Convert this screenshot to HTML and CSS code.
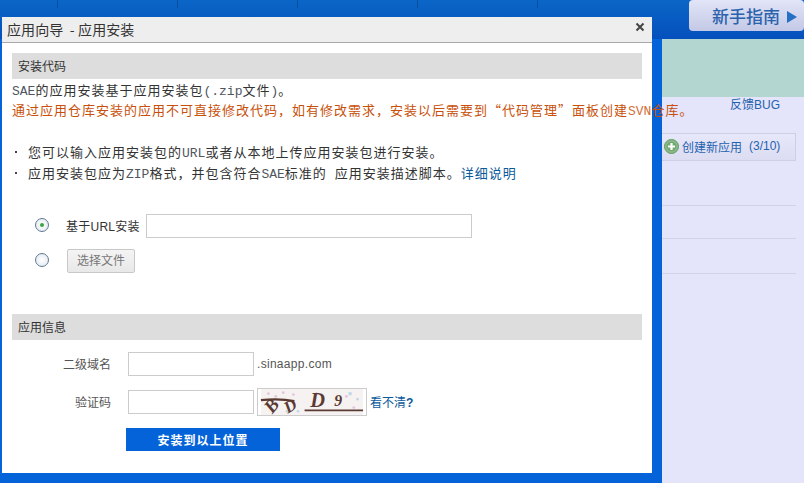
FILE: index.html
```html
<!DOCTYPE html>
<html lang="zh">
<head>
<meta charset="utf-8">
<title>应用向导</title>
<link rel="stylesheet" href="styles.css">
</head>
<body>
<header class="topbar">
  <ul class="tabs"><li></li><li></li><li></li><li></li><li></li></ul>
  <a class="guide">新手指南<span class="guide-arrow"></span></a>
</header>
<div class="band"></div>
<aside class="side">
  <a class="feedback">反馈BUG</a>
  <div class="create">
    <svg class="plus" width="15" height="15" viewBox="0 0 15 15"><circle cx="7.5" cy="7.5" r="7" fill="#8db98d" stroke="#5f9a5f"/><circle cx="7.5" cy="7.5" r="4.8" fill="#6fa96f"/><path d="M7.5 4v7M4 7.5h7" stroke="#fff" stroke-width="2.2"/></svg>
    <span>创建新应用</span><span class="count">(3/10)</span>
  </div>
  <div class="side-row r1"></div>
  <div class="side-row r2"></div>
  <div class="side-row r3"></div>
</aside>

<section class="modal">
  <div class="modal-title">
    <span>应用向导&nbsp; - 应用安装</span>
    <svg class="close" width="10" height="10" viewBox="0 0 10 10"><path d="M1.5 1.5l7 7M8.5 1.5l-7 7" stroke="#444" stroke-width="2"/></svg>
  </div>
  <div class="modal-body">
    <h3 class="sec">安装代码</h3>
    <p class="line"><span class="en">SAE</span>的应用安装基于应用安装包<span class="en">(.zip</span>文件<span class="en">)</span>。</p>
    <p class="line warn">通过应用仓库安装的应用不可直接修改代码，如有修改需求，安装以后需要到“代码管理”面板创建<span class="en">SVN</span>仓库。</p>
    <ul class="notes">
      <li>您可以输入应用安装包的<span class="en">URL</span>或者从本地上传应用安装包进行安装。</li>
      <li>应用安装包应为<span class="en">ZIP</span>格式，并包含符合<span class="en">SAE</span>标准的<span class="en"> </span>应用安装描述脚本。<a class="link">详细说明</a></li>
    </ul>
    <div class="src src-url">
      <span class="radio on"></span>
      <span class="src-label">基于URL安装</span>
      <span class="input url"></span>
    </div>
    <div class="src src-file">
      <span class="radio"></span>
      <span class="file-btn">选择文件</span>
    </div>
    <h3 class="sec sec2">应用信息</h3>
    <div class="field f1">
      <span class="f-label">二级域名</span>
      <span class="input small"></span>
      <span class="suffix">.sinaapp.com</span>
    </div>
    <div class="field f2">
      <span class="f-label">验证码</span>
      <span class="input small"></span>
      <svg class="captcha" width="110" height="28" viewBox="0 0 110 28">
        <rect width="110" height="28" fill="#f6f2f2"/>
        <g fill="#e3c6dd"><circle cx="8" cy="5" r="1.5"/><circle cx="16" cy="8" r="1.5"/><circle cx="24" cy="4" r="1.5"/><circle cx="35" cy="6" r="1.5"/><circle cx="92" cy="8" r="1.5"/><circle cx="100" cy="20" r="1.5"/><circle cx="60" cy="4" r="1"/></g>
        <g fill="#c5d8ea"><circle cx="13" cy="24" r="1.5"/><circle cx="40" cy="24" r="1.5"/><circle cx="96" cy="5" r="2"/><circle cx="104" cy="11" r="1.5"/><circle cx="28" cy="24" r="1.5"/></g>
        <g fill="#5a3a32" font-family="Liberation Serif, serif" font-weight="700" font-style="italic">
          <text x="5" y="24" font-size="20" transform="rotate(-50 12 18)">B</text>
          <text x="25" y="24" font-size="18" transform="rotate(-30 32 18)">D</text>
          <text x="53" y="19" font-size="22">D</text>
          <text x="79" y="18" font-size="17">9</text>
        </g>
        <path d="M0 12q20-2 36 1" stroke="#5a3a32" stroke-width="2.5" fill="none"/>
        <path d="M47 23h63" stroke="#5a3a32" stroke-width="2"/>
      </svg>
      <a class="refresh">看不清<b>?</b></a>
    </div>
    <button class="submit">安装到以上位置</button>
  </div>
</section>
</body>
</html>
```
FILE: styles.css
```css
* { box-sizing: border-box; }
html, body { margin: 0; padding: 0; height: 100%; }
body {
  width: 804px; height: 483px; overflow: hidden; position: relative;
  background: #e4e4fb;
  font-family: "Liberation Sans", "Noto Sans CJK SC", sans-serif;
  font-size: 12px; color: #333;
}
a { color: #0b5a9c; text-decoration: none; }
.topbar {
  height: 39px; position: relative;
  background: linear-gradient(#0b66c6, #0450bd);
}
.tabs { margin: 0; padding: 0 0 0 57px; list-style: none; display: flex; }
.tabs li { width: 120px; height: 8px; border-left: 1px solid #0a4e9e; }
.guide {
  position: absolute; left: 689px; top: 0; width: 115px; height: 31px;
  border-radius: 4px; background: linear-gradient(#e2e5f7, #c3c8e6);
  color: #2b62ac; font: 500 17px/31px "Noto Sans CJK SC", sans-serif;
  padding-left: 23px; white-space: nowrap;
}
.guide-arrow {
  display: inline-block; width: 0; height: 0; margin-left: 7px;
  border-left: 10px solid #2470c4; border-top: 6px solid transparent; border-bottom: 6px solid transparent;
}
.band { height: 58px; background: #b4d6d0; }
.side { padding: 0 8px 0 662px; position: relative; }
.feedback { display: block; height: 36px; padding-left: 68px; line-height: 16px; color: #1f62ae; white-space: nowrap; }
.create {
  height: 28px; display: flex; align-items: center; padding: 0 0 2px 2px; gap: 3px;
  background: linear-gradient(#e8e8fb, #dcdcf2);
  border: 1px solid #cfcfe4; border-left: 0;
  color: #1f62ae;
}
.count { margin-left: 4px; }
.side-row { border-bottom: 1px solid #d2d2e6; }
.r1 { height: 45px; }
.r2 { height: 33px; }
.r3 { height: 35px; }
.modal {
  position: absolute; left: 2px; top: 17px; width: 650px; height: 456px;
  background: #fff;
}
body::before {
  content: ""; position: absolute; left: 0; top: 17px; width: 662px; height: 466px; background: #0463d8;
}
.modal-title {
  height: 26px; background: #eee; border-bottom: 1px solid #aaa;
  display: flex; justify-content: space-between; align-items: center;
  padding: 0 7px 0 5px;
  font: 14px/25px "Noto Sans CJK SC", sans-serif; color: #333;
  letter-spacing: .1px;
}
.close { margin-top: -5px; }
.modal-body { padding: 10px 10px 0; }
.sec {
  margin: 0; height: 26px; padding-left: 6px; background: #ddd;
  font: 400 12px/26px "Noto Sans CJK SC", sans-serif; color: #333;
}
.line {
  margin: 0; height: 20px; line-height: 20px; white-space: nowrap;
  font-family: "Noto Sans CJK SC", sans-serif; font-size: 13px; letter-spacing: 1px; color: #333;
}
.en { font-family: "Liberation Mono", monospace; letter-spacing: 0; color: #50565e; }
.line.warn { color: #c8500a; }
.warn .en { color: #d2703a; }
.sec + .line { margin-top: 1px; }
.notes {
  margin: 21px 0 0; padding: 0; list-style: none;
  font-family: "Noto Sans CJK SC", sans-serif; font-size: 13px; letter-spacing: 1px;
}
.notes li { height: 21px; line-height: 21px; padding-left: 16px; position: relative; white-space: nowrap; }
.notes li::before { content: ""; position: absolute; left: 3px; top: 10px; width: 2px; height: 2px; background: #444; }
.link { color: #0b5a9c; }
.src { display: flex; align-items: center; padding-left: 23px; }
.src-url { margin-top: 31px; height: 24px; }
.src-file { margin-top: 11px; height: 24px; }
.radio {
  width: 14px; height: 14px; border-radius: 50%; border: 1.5px solid #5f7a93;
  background: radial-gradient(circle, #fff, #dfe6ee);
  position: relative; flex: none; margin-top: -2px;
}
.radio.on::after { content: ""; position: absolute; left: 3.5px; top: 3.5px; width: 4px; height: 4px; border-radius: 50%; background: #3ea33e; }
.src-label { margin-left: 17px; width: 80px; flex: none; white-space: nowrap; letter-spacing: .25px; padding-bottom: 1px; }
.input { display: block; background: #fff; border: 1px solid #ccc; height: 24px; flex: none; }
.input.url { width: 326px; }
.input.small { width: 126px; }
.file-btn {
  margin-left: 18px; width: 68px; height: 24px; text-align: center; line-height: 22px;
  border: 1px solid #c8c8c8; border-radius: 2px; background: linear-gradient(#f4f4f4, #e8e8e8); color: #777;
}
.sec2 { margin-top: 41px; }
.field { display: flex; align-items: center; }
.f1 { margin-top: 12px; height: 24px; }
.f2 { margin-top: 12px; height: 28px; }
.f-label { width: 100px; text-align: right; padding: 0 1px 2px 0; margin-right: 16px; color: #555; white-space: nowrap; }
.suffix { margin-left: 3px; color: #555; letter-spacing: .3px; }
.captcha { margin-left: 3px; flex: none; border: 1px solid #ccc; }
.refresh { margin-left: 3px; padding-bottom: 2px; }
.refresh b { font-weight: 700; }
.submit {
  display: block; margin: 12px 0 0 114px; width: 154px; height: 23px; padding: 0;
  border: 0; background: #0463d8; color: #fff;
  font: 700 12px/23px "Noto Sans CJK SC", sans-serif; letter-spacing: 1px;
}
```
